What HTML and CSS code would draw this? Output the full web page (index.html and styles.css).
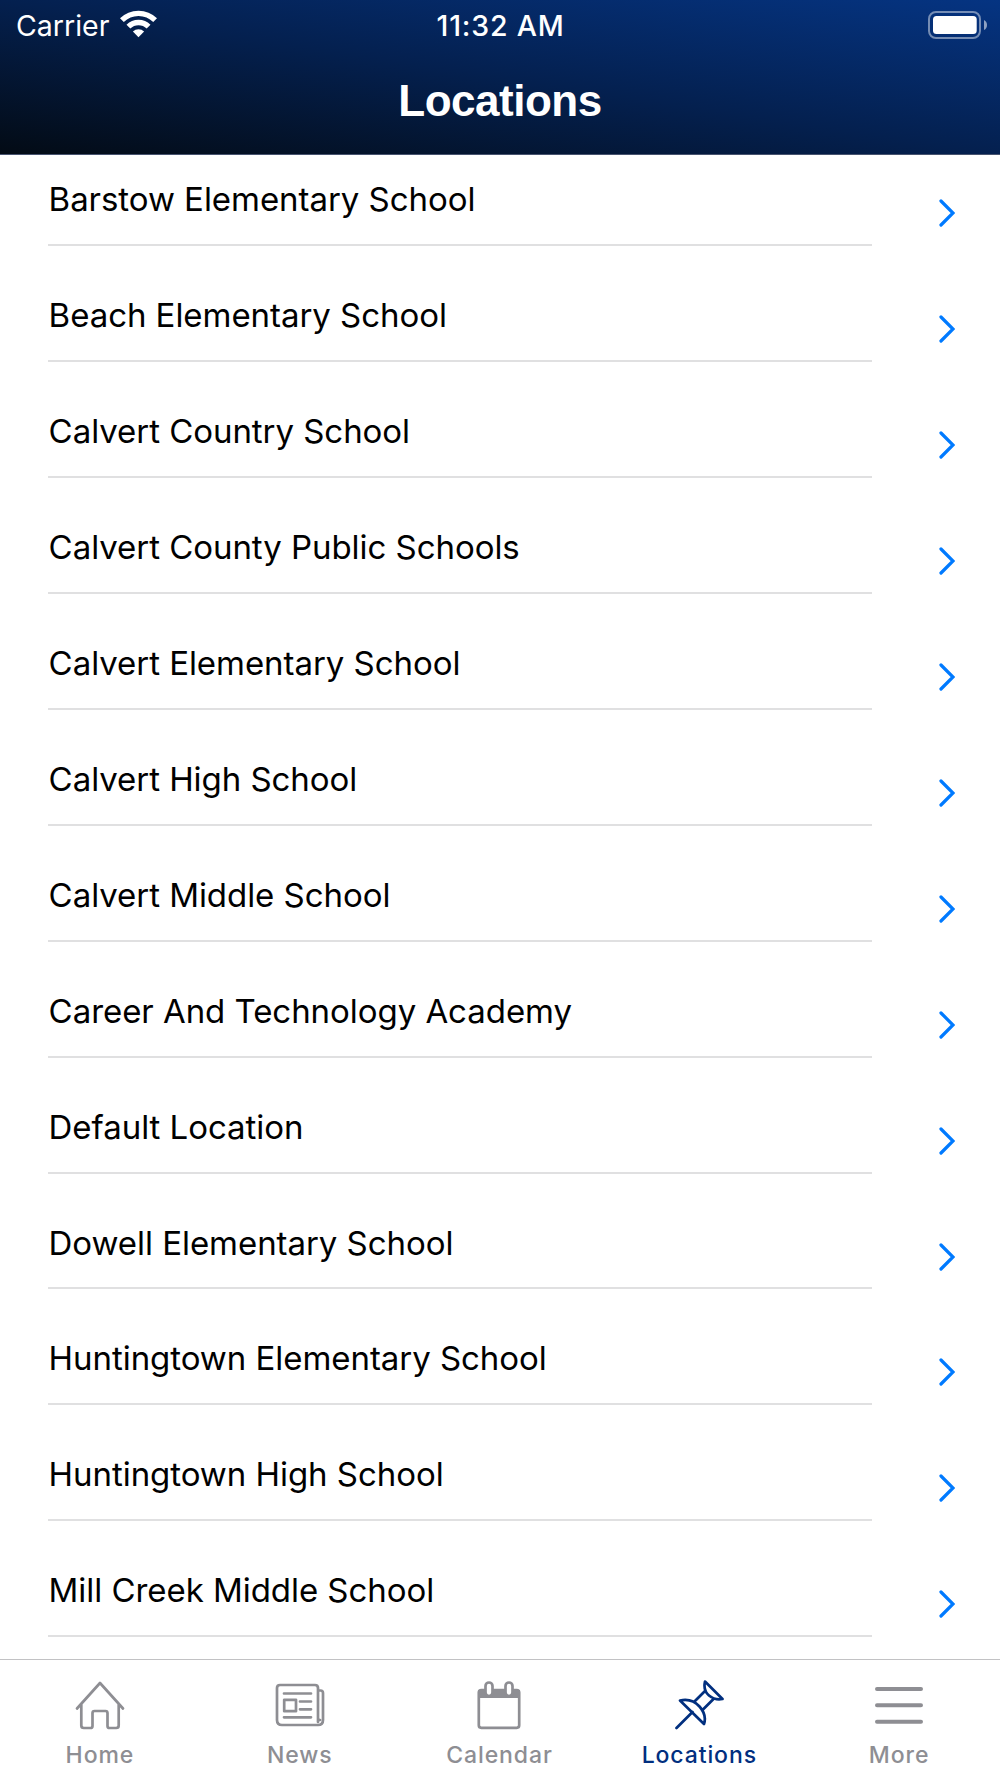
FILE: index.html
```html
<!DOCTYPE html>
<html lang="en">
<head>
<meta charset="utf-8">
<title>Locations</title>
<link rel="stylesheet" href="styles.css">
</head>
<body>
<div class="app">
  <header class="header">
    <div class="status">
      <div class="status-left">
        <span class="carrier">Carrier</span>
        <svg class="wifi" width="37" height="28" viewBox="0 0 37 28">
          <g fill="none" stroke="#fff" stroke-width="5.4">
            <path d="M1.9 10.2A23.5 23.5 0 0 1 35.1 10.2"/>
            <path d="M8.4 16.7A14.3 14.3 0 0 1 28.6 16.7"/>
          </g>
          <path fill="#fff" d="M18.5 27.3L12.9 21.6A8 8 0 0 1 24.1 21.6Z"/>
        </svg>
      </div>
      <span class="time">11:32 AM</span>
      <div class="status-right">
        <svg width="60" height="28" viewBox="0 0 60 28">
          <rect x="1" y="1" width="51" height="26" rx="7" fill="none" stroke="#fff" stroke-opacity=".45" stroke-width="2"/>
          <rect x="5" y="5" width="43.7" height="18" rx="3.5" fill="#fff"/>
          <path fill="#fff" fill-opacity=".55" d="M56 9Q59 10.500 59 14T56 19Z"/>
        </svg>
      </div>
    </div>
    <h1 class="title">Locations</h1>
  </header>
  <main class="list">
    <a class="row"><span class="name">Barstow Elementary School</span><svg class="chevron" viewBox="0 0 16 28"><path d="M2 2L14 14L2 26"/></svg></a>
    <a class="row"><span class="name">Beach Elementary School</span><svg class="chevron" viewBox="0 0 16 28"><path d="M2 2L14 14L2 26"/></svg></a>
    <a class="row"><span class="name">Calvert Country School</span><svg class="chevron" viewBox="0 0 16 28"><path d="M2 2L14 14L2 26"/></svg></a>
    <a class="row"><span class="name">Calvert County Public Schools</span><svg class="chevron" viewBox="0 0 16 28"><path d="M2 2L14 14L2 26"/></svg></a>
    <a class="row"><span class="name">Calvert Elementary School</span><svg class="chevron" viewBox="0 0 16 28"><path d="M2 2L14 14L2 26"/></svg></a>
    <a class="row"><span class="name">Calvert High School</span><svg class="chevron" viewBox="0 0 16 28"><path d="M2 2L14 14L2 26"/></svg></a>
    <a class="row"><span class="name">Calvert Middle School</span><svg class="chevron" viewBox="0 0 16 28"><path d="M2 2L14 14L2 26"/></svg></a>
    <a class="row"><span class="name">Career And Technology Academy</span><svg class="chevron" viewBox="0 0 16 28"><path d="M2 2L14 14L2 26"/></svg></a>
    <a class="row"><span class="name">Default Location</span><svg class="chevron" viewBox="0 0 16 28"><path d="M2 2L14 14L2 26"/></svg></a>
    <a class="row"><span class="name">Dowell Elementary School</span><svg class="chevron" viewBox="0 0 16 28"><path d="M2 2L14 14L2 26"/></svg></a>
    <a class="row"><span class="name">Huntingtown Elementary School</span><svg class="chevron" viewBox="0 0 16 28"><path d="M2 2L14 14L2 26"/></svg></a>
    <a class="row"><span class="name">Huntingtown High School</span><svg class="chevron" viewBox="0 0 16 28"><path d="M2 2L14 14L2 26"/></svg></a>
    <a class="row"><span class="name">Mill Creek Middle School</span><svg class="chevron" viewBox="0 0 16 28"><path d="M2 2L14 14L2 26"/></svg></a>
  </main>
  <nav class="tabs">
    <a class="tab">
      <svg class="icon" viewBox="0 0 50 50"><path d="M2 28.500L25 3L48 28.500M6.300 24V45.500Q6.300 48 8.800 48H15.500Q17.500 48 17.500 46V33Q17.500 31 19.500 31H30.500Q32.500 31 32.500 33V46Q32.500 48 34.500 48H41.200Q43.700 48 43.700 45.500V24"/></svg>
      <span>Home</span>
    </a>
    <a class="tab">
      <svg class="icon" viewBox="0 0 50 50"><path d="M43 42V8Q43 5 40 5H5Q2 5 2 8V40Q2 45 7 45H43Q48 45 48 40V13Q48 10.500 45.500 10.500H43V38Q43 40 45 40M9 13.500H36M25 21.500H36M25 29.300H36M9 37.300H36"/><rect x="9.200" y="19.800" width="11.800" height="11.400"/></svg>
      <span>News</span>
    </a>
    <a class="tab">
      <svg class="icon" viewBox="0 0 50 50"><rect x="4.800" y="10" width="40.400" height="37.800" rx="2.500"/><path fill="currentColor" stroke="none" d="M4 10H46V18H4Z"/><g class="rings"><rect x="11.500" y="2.500" width="7" height="13.500" rx="3.500"/><rect x="31.500" y="2.500" width="7" height="13.500" rx="3.500"/></g></svg>
      <span>Calendar</span>
    </a>
    <a class="tab active">
      <svg class="icon" viewBox="0 0 50 50"><path d="M2.500 48L18.500 32M6 20.500L30 44Q33 35 25.500 26.500T6 20.500ZM21 21L31.500 10.500M29 29.500L39.500 19M31 1.500L48.500 19Q41 20.500 35 15.500T31 1.500Z"/></svg>
      <span>Locations</span>
    </a>
    <a class="tab">
      <svg class="icon menu" viewBox="0 0 50 50"><path d="M3 9H47M3 25.300H47M3 41.700H47"/></svg>
      <span>More</span>
    </a>
  </nav>
</div>
</body>
</html>
```
FILE: styles.css
```css
* { box-sizing: border-box; }

body {
  margin: 0;
  background: #fff;
  font-family: Inter, "Liberation Sans", sans-serif;
}

.app {
  display: flex;
  flex-direction: column;
  width: 1000px;
  height: 1778px;
  overflow: hidden;
}

.header {
  flex: none;
  height: 155px;
  color: #fff;
  background: linear-gradient(to top right, #030b15, #04204f 50%, #053482);
  border-bottom: 1px solid #47536f;
}

.status {
  display: grid;
  grid-template-columns: 1fr auto 1fr;
  align-items: center;
  height: 50px;
  padding: 0 12px 0 16px;
}

.status-left { display: flex; align-items: center; gap: 11px; }
.status-right { display: flex; justify-content: flex-end; }
.wifi { margin-top: -3px; }
.status-right svg { margin-top: -1px; }

.carrier { font-size: 28.5px; }

.time {
  padding-right: 3px;
  font-size: 28.5px;
  font-weight: 500;
  letter-spacing: 0.8px;
}

.title {
  margin: 26px 0 0;
  font: bold 44px/50px "Liberation Sans", Arial, sans-serif;
  letter-spacing: -0.5px;
  text-align: center;
}

.list {
  flex: 1;
  min-height: 0;
  overflow: hidden;
}

.row {
  display: flex;
  justify-content: space-between;
  height: 115.94px;
  padding: 0 45px 0 48px;
}

.row:first-child { height: 91px; }

.name {
  width: 824px;
  height: 100%;
  padding: 44px 0 0 0.6px;
  border-bottom: 2px solid #e0e0e1;
  color: #000;
  font-size: 33px;
  letter-spacing: -0.05px;
  line-height: 50px;
  white-space: nowrap;
}

.row:first-child .name { padding-top: 19px; }

.chevron {
  width: 16px;
  height: 28px;
  margin-top: 69px;
  fill: none;
  stroke: #007aff;
  stroke-width: 3.2;
  stroke-linecap: round;
}

.row:first-child .chevron { margin-top: 44px; }

.tabs {
  flex: none;
  display: grid;
  grid-template-columns: repeat(5, 1fr);
  height: 119px;
  padding-right: 1px;
  border-top: 1px solid #c2c2c4;
}

.tab {
  display: flex;
  flex-direction: column;
  align-items: center;
  padding-top: 20px;
  color: #8e8e93;
  font-size: 23px;
  font-weight: 450;
  letter-spacing: 0.9px;
  line-height: 28px;
}

.tab span { margin-top: 11px; }
.tab.active { color: #012f7f; }

.icon {
  width: 50px;
  height: 50px;
  fill: none;
  stroke: currentColor;
  stroke-width: 2.7;
  stroke-linecap: round;
  stroke-linejoin: round;
}

.rings { fill: #fff; }
.menu { stroke-width: 4; }
```
